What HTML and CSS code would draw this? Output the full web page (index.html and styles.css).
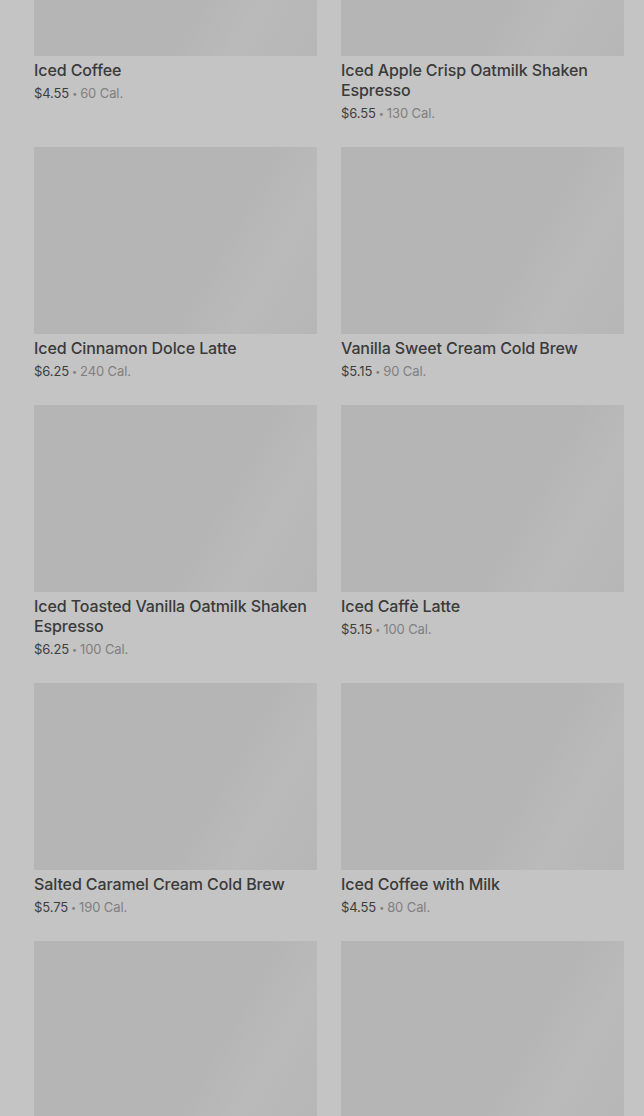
FILE: index.html
```html
<!DOCTYPE html>
<html lang="en">
<head>
  <meta charset="UTF-8">
  <meta name="viewport" content="width=device-width, initial-scale=1.0">
  <title>Cold Coffees</title>
  <link rel="stylesheet" href="styles.css">
</head>
<body>
  <div class="menu">
    <div class="grid">
      <div class="card">
        <div class="thumb"></div>
        <div class="name">Iced Coffee</div>
        <div class="meta"><span class="price">$4.55</span><span class="dot">•</span>60 Cal.</div>
      </div>
      <div class="card">
        <div class="thumb"></div>
        <div class="name">Iced Apple Crisp Oatmilk Shaken Espresso</div>
        <div class="meta"><span class="price">$6.55</span><span class="dot">•</span>130 Cal.</div>
      </div>
      <div class="card">
        <div class="thumb"></div>
        <div class="name">Iced Cinnamon Dolce Latte</div>
        <div class="meta"><span class="price">$6.25</span><span class="dot">•</span>240 Cal.</div>
      </div>
      <div class="card">
        <div class="thumb"></div>
        <div class="name">Vanilla Sweet Cream Cold Brew</div>
        <div class="meta"><span class="price">$5.15</span><span class="dot">•</span>90 Cal.</div>
      </div>
      <div class="card">
        <div class="thumb"></div>
        <div class="name">Iced Toasted Vanilla Oatmilk Shaken Espresso</div>
        <div class="meta"><span class="price">$6.25</span><span class="dot">•</span>100 Cal.</div>
      </div>
      <div class="card">
        <div class="thumb"></div>
        <div class="name">Iced Caffè Latte</div>
        <div class="meta"><span class="price">$5.15</span><span class="dot">•</span>100 Cal.</div>
      </div>
      <div class="card">
        <div class="thumb"></div>
        <div class="name">Salted Caramel Cream Cold Brew</div>
        <div class="meta"><span class="price">$5.75</span><span class="dot">•</span>190 Cal.</div>
      </div>
      <div class="card">
        <div class="thumb"></div>
        <div class="name">Iced Coffee with Milk</div>
        <div class="meta"><span class="price">$4.55</span><span class="dot">•</span>80 Cal.</div>
      </div>
      <div class="card">
        <div class="thumb"></div>
      </div>
      <div class="card">
        <div class="thumb"></div>
      </div>
    </div>
  </div>
</body>
</html>
```

FILE: styles.css
```css
* {
  box-sizing: border-box;
}
html, body {
  margin: 0;
  height: 100%;
  overflow: hidden;
}
body {
  background: #c4c4c4;
  font-family: Inter, "Noto Sans", sans-serif;
  color: #3b3b3b;
}
.menu {
  padding: 0 20px 0 34px;
}
.grid {
  display: grid;
  grid-template-columns: repeat(2, 1fr);
  column-gap: 24px;
  row-gap: 24px;
  margin-top: -131px;
}
.thumb {
  height: 187px;
  background: linear-gradient(120deg, #b5b5b5 0%, #b5b5b5 62%, #bababa 78%, #b6b6b6 100%);
}
.name {
  margin-top: 4px;
  font-size: 16px;
  font-weight: 500;
  line-height: 20px;
  letter-spacing: -0.1px;
  color: #3a3a3a;
}
.meta {
  margin-top: 3px;
  height: 20px;
  font-size: 13px;
  line-height: 20px;
  letter-spacing: -0.1px;
  color: #808080;
}
.price {
  color: #3e3e3e;
}
.dot {
  font-size: 9px;
  line-height: 0;
  margin: 0 3px;
  vertical-align: 1px;
}
```
